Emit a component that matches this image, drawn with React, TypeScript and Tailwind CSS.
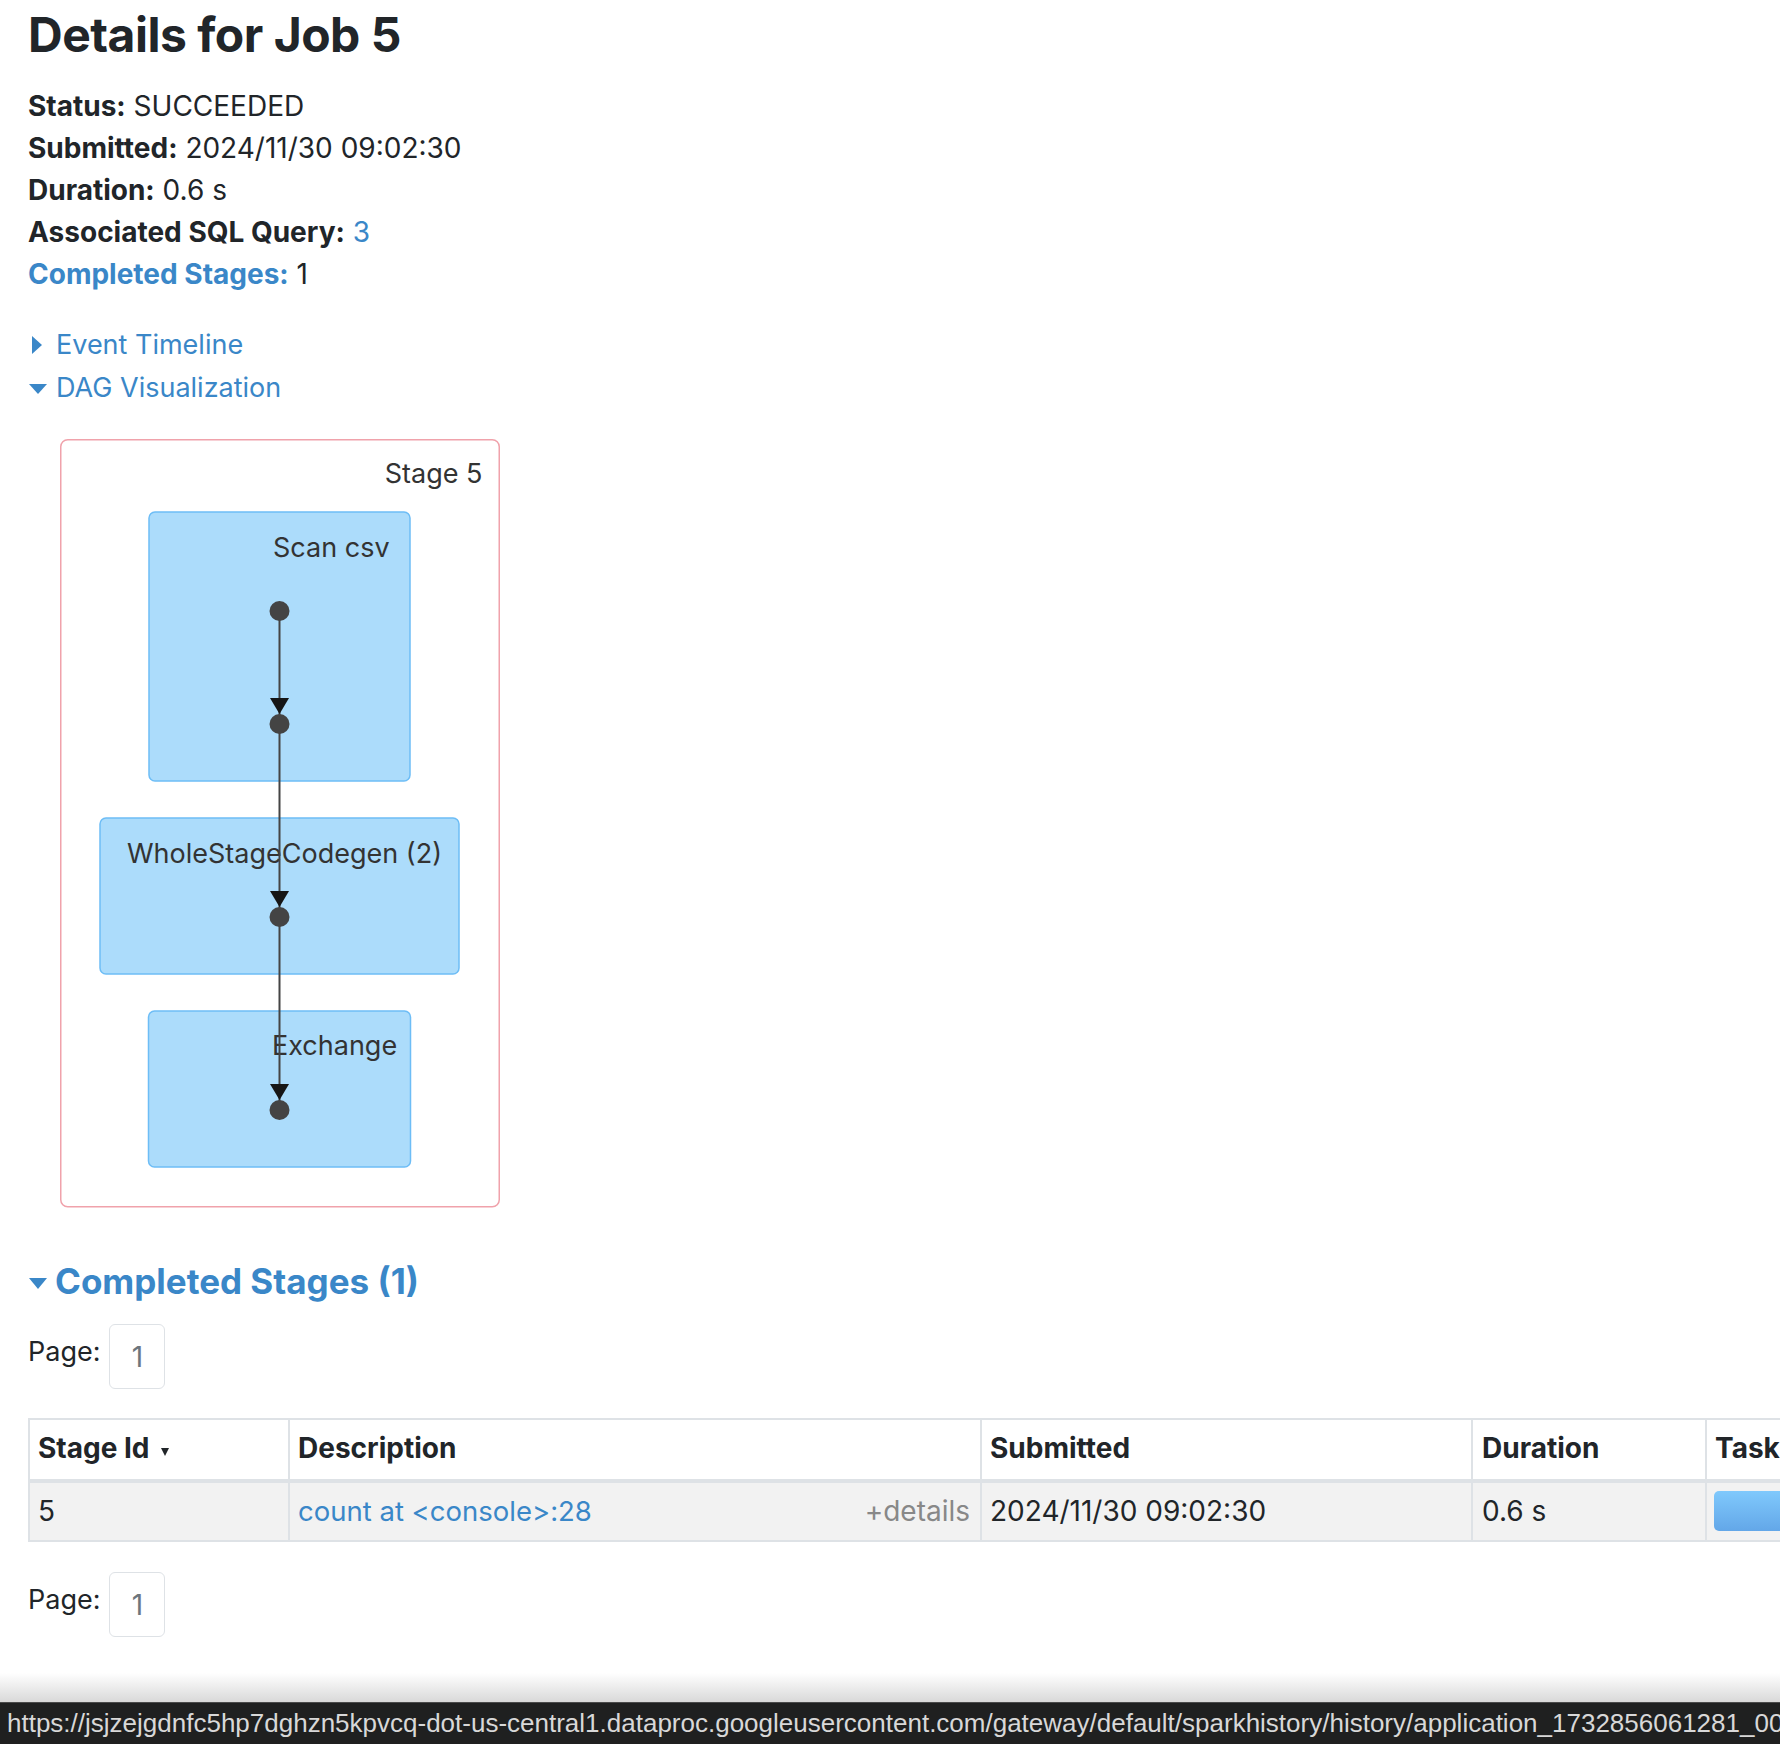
import React from 'react';

const rows = [
  { label: 'Status:', value: 'SUCCEEDED' },
  { label: 'Submitted:', value: '2024/11/30 09:02:30' },
  { label: 'Duration:', value: '0.6 s' },
];

function DagViz() {
  const lineX = 219.5;
  const dots = [172, 285, 478, 671];
  const font = 'Inter, sans-serif';
  return (
    <svg width="440" height="769" viewBox="0 0 440 769" className="block">
      <rect x="0.75" y="0.75" width="438.5" height="767" rx="7" fill="#fff" stroke="#f0a2ab" strokeWidth="1.5" />
      <text x="422.5" y="44" textAnchor="end" fontFamily={font} fontSize="27" fill="#333">
        Stage 5
      </text>

      <rect x="89" y="73" width="261" height="269" rx="6" fill="#acdcfb" stroke="#6dbdf6" strokeWidth="1.5" />
      <rect x="40" y="379" width="359" height="156" rx="6" fill="#acdcfb" stroke="#6dbdf6" strokeWidth="1.5" />
      <rect x="88.5" y="572" width="262" height="156" rx="6" fill="#acdcfb" stroke="#6dbdf6" strokeWidth="1.5" />

      <text x="213" y="118" fontFamily={font} fontSize="27" fill="#333">Scan csv</text>
      <text x="67" y="424" fontFamily={font} fontSize="27" fill="#333">WholeStageCodegen (2)</text>
      <text x="212" y="616" fontFamily={font} fontSize="27" fill="#333">Exchange</text>

      <line x1={lineX} y1={172} x2={lineX} y2={671} stroke="#444" strokeWidth="2" />
      {dots.slice(1).map((d) => (
        <polygon
          key={'a' + d}
          points={`${lineX - 9.5},${d - 26} ${lineX + 9.5},${d - 26} ${lineX},${d - 10}`}
          fill="#161616"
        />
      ))}
      {dots.map((d) => (
        <circle key={d} cx={lineX} cy={d} r="10" fill="#444" />
      ))}
    </svg>
  );
}

function PageBox() {
  return (
    <div className="flex items-start">
      <span className="mt-[7px] text-[27px] leading-[42px]">Page:</span>
      <div className="ml-[9px] flex h-[65px] w-[56px] items-center justify-center rounded-[6px] border-[1.5px] border-[#dee2e6] text-[28px] leading-[42px] text-[#6c757d]">
        1
      </div>
    </div>
  );
}

export default function App() {
  return (
    <div className="relative h-[1744px] w-[1780px] overflow-hidden bg-white font-['Inter',sans-serif] text-[#212529]">
      <div className="pl-[28px] pt-[6px]">
        <h3 className="text-[48px] font-bold leading-[58px] tracking-[-0.5px]">Details for Job 5</h3>

        <ul className="mt-[21px] text-[28px] leading-[42px]">
          {rows.map((r) => (
            <li key={r.label}>
              <strong>{r.label}</strong> {r.value}
            </li>
          ))}
          <li>
            <strong>Associated SQL Query:</strong> <a className="text-[#3a87c8]">3</a>
          </li>
          <li>
            <a className="font-bold text-[#3a87c8]">Completed Stages:</a> 1
          </li>
        </ul>

        <div className="mt-[28px] text-[27px] leading-[43px] text-[#3a87c8]">
          <div className="flex items-center">
            <span className="ml-[4px] h-0 w-0 border-y-[9px] border-l-[10px] border-y-transparent border-l-[#3a87c8]" />
            <span className="ml-[14px]">Event Timeline</span>
          </div>
          <div className="flex items-center">
            <span className="ml-[1px] mt-[2px] h-0 w-0 border-x-[9px] border-t-[10px] border-x-transparent border-t-[#3a87c8]" />
            <span className="ml-[9px]">DAG Visualization</span>
          </div>
        </div>

        <div className="ml-[32px] mt-[30px]">
          <DagViz />
        </div>

        <div className="mt-[53px] flex items-center text-[#3a87c8]">
          <span className="ml-[1px] mt-[4px] h-0 w-0 border-x-[9.5px] border-t-[11px] border-x-transparent border-t-[#3a87c8]" />
          <h4 className="ml-[8px] text-[35px] font-bold leading-[40px]">Completed Stages (1)</h4>
        </div>

        <div className="mt-[23px]">
          <PageBox />
        </div>

        <div className="mt-[29px] w-[2100px] border-2 border-[#dee2e6] text-[28px] leading-[42px]">
          <div className="flex border-b-4 border-[#dee2e6] font-bold">
            <div className="flex h-[59px] w-[258px] shrink-0 items-start px-[8px] pt-[7px]">
              Stage Id
              <svg width="8" height="8" viewBox="0 0 8 8" className="ml-[11px] mt-[21px]">
                <polygon points="0,0 8,0 4,8" fill="#212529" />
              </svg>
            </div>
            <div className="h-[59px] w-[692px] shrink-0 border-l-2 border-[#dee2e6] px-[8px] pt-[7px]">Description</div>
            <div className="h-[59px] w-[491px] shrink-0 border-l-2 border-[#dee2e6] px-[8px] pt-[7px]">Submitted</div>
            <div className="h-[59px] w-[234px] shrink-0 border-l-2 border-[#dee2e6] px-[9px] pt-[7px]">Duration</div>
            <div className="h-[59px] w-[600px] shrink-0 whitespace-nowrap border-l-2 border-[#dee2e6] px-[8px] pt-[7px]">
              Tasks: Succeeded/Total
            </div>
          </div>
          <div className="flex bg-[#f2f2f2]">
            <div className="h-[57px] w-[258px] shrink-0 px-[8px] pt-[7px]">5</div>
            <div className="flex h-[57px] w-[692px] shrink-0 justify-between border-l-2 border-[#dee2e6] pl-[8px] pr-[10px] pt-[7px]">
              <a className="text-[27.5px] text-[#3a87c8]">{'count at <console>:28'}</a>
              <span className="text-[#888]">+details</span>
            </div>
            <div className="h-[57px] w-[491px] shrink-0 border-l-2 border-[#dee2e6] px-[8px] pt-[7px]">2024/11/30 09:02:30</div>
            <div className="h-[57px] w-[234px] shrink-0 border-l-2 border-[#dee2e6] px-[9px] pt-[7px]">0.6 s</div>
            <div className="h-[57px] w-[600px] shrink-0 border-l-2 border-[#dee2e6] pl-[7px] pt-[8px]">
              <div className="h-[40px] w-[400px] rounded-[5px] bg-linear-to-b from-[#80c9fc] to-[#63a7e8]" />
            </div>
          </div>
        </div>

        <div className="mt-[30px]">
          <PageBox />
        </div>
      </div>

      <div className="absolute bottom-[42px] left-0 h-[29px] w-full bg-linear-to-b from-white/0 to-[#d9d9d9]" />
      <div className="absolute bottom-0 left-0 h-[42px] w-full overflow-hidden whitespace-nowrap border-t border-[#4a4a4a] bg-[#1f2020] pl-[7px] font-['Liberation_Sans',sans-serif] text-[26px] leading-[41px] text-[#d8d8d8]">
        https://jsjzejgdnfc5hp7dghzn5kpvcq-dot-us-central1.dataproc.googleusercontent.com/gateway/default/sparkhistory/history/application_1732856061281_0001
      </div>
    </div>
  );
}
